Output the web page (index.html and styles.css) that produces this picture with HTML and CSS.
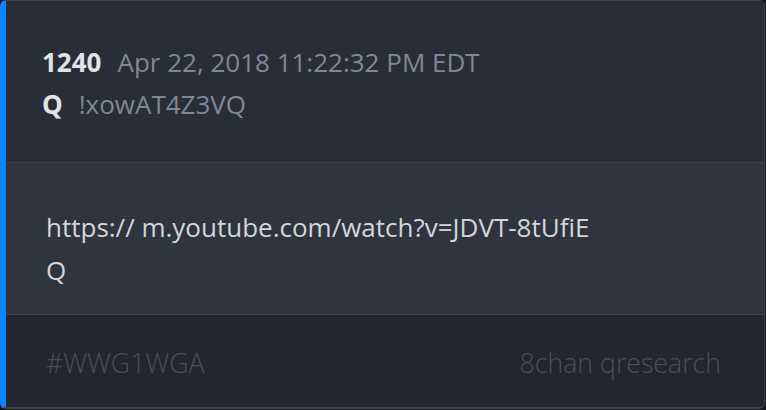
FILE: index.html
```html
<!DOCTYPE html>
<html>
<head>
<meta charset="utf-8">
<link rel="stylesheet" href="styles.css">
</head>
<body>
<div class="card">
  <div class="head">
    <div class="line"><span class="num">1240</span><span class="meta">Apr 22, 2018 11:22:32 PM EDT</span></div>
    <div class="line"><span class="num">Q</span><span class="meta">!xowAT4Z3VQ</span></div>
  </div>
  <div class="body">
    <div class="text">https:// m.youtube.com/watch?v=JDVT-8tUfiE</div>
    <div class="text">Q</div>
  </div>
  <div class="foot">
    <span class="tag">#WWG1WGA</span>
    <span class="src">8chan qresearch</span>
  </div>
</div>
</body>
</html>
```
FILE: styles.css
```css
html, body {
  margin: 0;
  padding: 0;
  background: #16181d;
}
body {
  width: 766px;
  height: 410px;
  font-family: "Open Sans", "DejaVu Sans", sans-serif;
}
.card {
  box-sizing: border-box;
  width: 765px;
  height: 409px;
  border: 1px solid #3d424d;
  border-left: 6px solid #0a84ff;
  border-bottom-width: 2px;
  border-radius: 6px;
  overflow: hidden;
  display: flex;
  flex-direction: column;
}
.head {
  background: #292d36;
  height: 162px;
  box-sizing: border-box;
  padding: 40px 0 0 36px;
  border-bottom: 1px solid #3d424d;
}
.line {
  height: 42px;
  line-height: 42px;
  font-size: 26px;
  white-space: nowrap;
}
.num {
  color: #e2e3e5;
  font-weight: 700;
  margin-right: 16px;
}
.meta {
  color: #828796;
}
.body {
  background: #2f343e;
  height: 152px;
  box-sizing: border-box;
  padding: 43px 0 0 40px;
  border-bottom: 1px solid #3d424d;
}
.text {
  color: #d4d6d9;
  font-size: 26px;
  line-height: 43px;
  white-space: nowrap;
}
.foot {
  flex: 1;
  background: #23262f;
  display: flex;
  justify-content: space-between;
  align-items: center;
  padding: 2px 43px 0 40px;
  font-size: 26.7px;
  font-weight: 300;
  color: #4a4f5b;
}
```
